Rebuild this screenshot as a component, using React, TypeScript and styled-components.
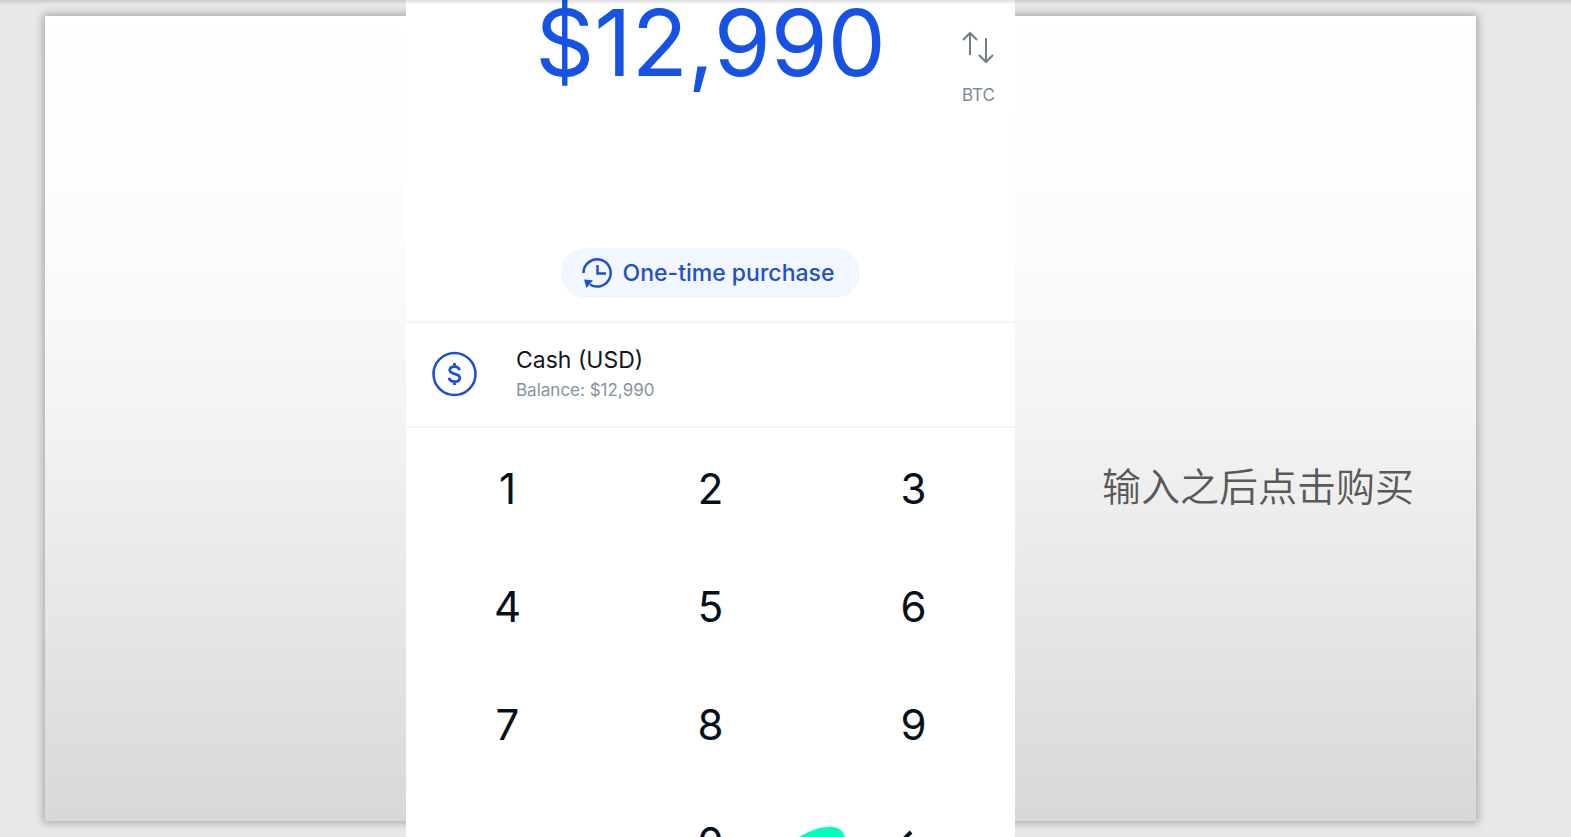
import React from "react";
import styled, { createGlobalStyle } from "styled-components";

const GlobalStyle = createGlobalStyle`
  * { box-sizing: border-box; }
  body { margin: 0; background: #e8e8e8; }
  button { border: 0; padding: 0; background: none; font: inherit; color: inherit; cursor: pointer; }
`;

const Page = styled.main`
  position: relative;
  display: flex;
  height: 100vh;
  padding: 16px 95px 16px 45px;
  overflow: hidden;
  font-family: Inter, "Noto Sans CJK SC", sans-serif;
`;

const TopShade = styled.div`
  position: absolute;
  inset: 0 0 auto;
  height: 5px;
  background: linear-gradient(rgba(0, 0, 0, 0.12), rgba(0, 0, 0, 0));
  pointer-events: none;
`;

const Slide = styled.section`
  flex: 1;
  display: grid;
  grid-template-columns: 361fr 609fr 461fr;
  background: linear-gradient(#ffffff 0%, #fcfcfc 28%, #f3f3f3 50%, #e6e6e6 75%, #d8d8d8 100%);
  box-shadow: 0 0 8px 2px rgba(0, 0, 0, 0.28);
`;

const Phone = styled.div`
  grid-column: 2;
  display: flex;
  flex-direction: column;
  margin: -16px 0;
  overflow: hidden;
  background: #ffffff;
`;

const Entry = styled.header`
  display: flex;
  flex-direction: column;
  justify-content: space-between;
  align-items: center;
  flex: none;
  height: 323px;
  padding-bottom: 23px;
  border-bottom: 2px solid #f3f4f5;
`;

const AmountRow = styled.div`
  display: grid;
  grid-template-columns: 1fr auto 1fr;
  width: 100%;
`;

const Amount = styled.output`
  grid-column: 2;
  color: #1652e4;
  font-size: 92px;
  line-height: 86px;
`;

const Swap = styled.button`
  justify-self: end;
  align-self: start;
  display: flex;
  flex-direction: column;
  align-items: center;
  gap: 19px;
  padding: 30px 20px 0 0;
  color: #7b8b9a;
  font-size: 17px;
  line-height: 24px;
`;

const Pill = styled.button`
  display: flex;
  align-items: center;
  gap: 10px;
  height: 50px;
  padding: 0 26px 0 20px;
  border-radius: 25px;
  background: #f2f6fe;
  color: #1f50c8;
  font-size: 23px;
  font-weight: 500;
`;

const Source = styled.button`
  display: flex;
  align-items: center;
  gap: 38px;
  flex: none;
  height: 105px;
  padding: 0 26px 2px;
  border-bottom: 2px solid #f3f4f5;
  text-align: left;
`;

const SourceText = styled.span`
  display: flex;
  flex-direction: column;
`;

const SourceName = styled.span`
  color: #14161a;
  font-size: 23px;
  line-height: 32px;
`;

const SourceBalance = styled.span`
  color: #8594a1;
  font-size: 17px;
  line-height: 28px;
`;

const Keypad = styled.div`
  display: grid;
  grid-template-columns: repeat(3, 1fr);
  grid-auto-rows: 118px;
  flex: none;
  padding-top: 1px;
`;

const Key = styled.button`
  display: grid;
  place-items: center;
  color: #06101b;
  font-size: 42px;
`;

const ZeroKey = styled(Key)`
  grid-column: 2;
`;

const Highlight = styled.svg`
  position: absolute;
  bottom: 0;
  left: calc(45px + (100% - 140px) * 0.526);
`;

const Caption = styled.p`
  align-self: center;
  margin: 0 0 0 87px;
  padding-top: 130px;
  color: #595959;
  font-family: "Noto Sans CJK SC", sans-serif;
  font-size: 39px;
  font-weight: 350;
  line-height: 52px;
  white-space: nowrap;
`;

const SwapIcon = () => (
  <svg width="32" height="34" viewBox="0 0 32 34" fill="none" stroke="#6c7f8c" strokeWidth="2" aria-hidden="true">
    <path d="M8 25V4M1 10l7-7 7 7M24 8v23M17 25l7 7 7-7" />
  </svg>
);

const RepeatIcon = () => (
  <svg width="32" height="32" viewBox="0 0 32 32" fill="none" stroke="currentColor" strokeWidth="2.4" aria-hidden="true">
    <path d="M2.5 16A13.6 13.6 0 1 1 9 27.5" />
    <path d="M16.5 8v8.5H25" />
    <path d="M3 22.5l9 .8-6.5 7.7z" fill="currentColor" stroke="none" />
  </svg>
);

const CashIcon = () => (
  <svg width="46" height="46" viewBox="0 0 46 46" fill="none" stroke="#1f50d4" strokeWidth="2.6" aria-hidden="true">
    <circle cx="22.5" cy="23" r="21" />
    <path
      strokeWidth="2.8"
      d="M27.5 19.2c-.5-2.3-2.3-3.6-5-3.6-2.8 0-4.700 1.400-4.700 3.500 0 2.400 2.100 3.100 4.700 3.700 3 .7 5.300 1.500 5.300 4.100 0 2.300-2 3.700-5.200 3.700-3.100 0-5.100-1.400-5.500-3.900M22.500 12v3.600M22.500 30.500v3.600"
    />
  </svg>
);

const DeleteIcon = () => (
  <svg width="32" height="24" viewBox="0 0 32 24" fill="none" stroke="currentColor" strokeWidth="4" aria-hidden="true">
    <path d="M13 2L3 12l10 10M3 12h29" />
  </svg>
);

const digits = ["1", "2", "3", "4", "5", "6", "7", "8", "9"];

export default function App() {
  return (
    <>
      <GlobalStyle />
      <Page>
        <Slide>
          <Phone>
            <Entry>
              <AmountRow>
                <Amount>$12,990</Amount>
                <Swap>
                  <SwapIcon />
                  BTC
                </Swap>
              </AmountRow>
              <Pill>
                <RepeatIcon />
                One-time purchase
              </Pill>
            </Entry>
            <Source>
              <CashIcon />
              <SourceText>
                <SourceName>Cash (USD)</SourceName>
                <SourceBalance>Balance: $12,990</SourceBalance>
              </SourceText>
            </Source>
            <Keypad>
              {digits.map((digit) => (
                <Key key={digit}>{digit}</Key>
              ))}
              <ZeroKey>0</ZeroKey>
              <Key aria-label="Delete">
                <DeleteIcon />
              </Key>
            </Keypad>
          </Phone>
          <Caption>输入之后点击购买</Caption>
        </Slide>
        <Highlight width="52" height="11" viewBox="0 0 52 11" aria-hidden="true">
          <path d="M1 11C14 4 22 1 30 1C39 0 45 4 47 11Z" fill="#00ffba" />
        </Highlight>
        <TopShade />
      </Page>
    </>
  );
}
